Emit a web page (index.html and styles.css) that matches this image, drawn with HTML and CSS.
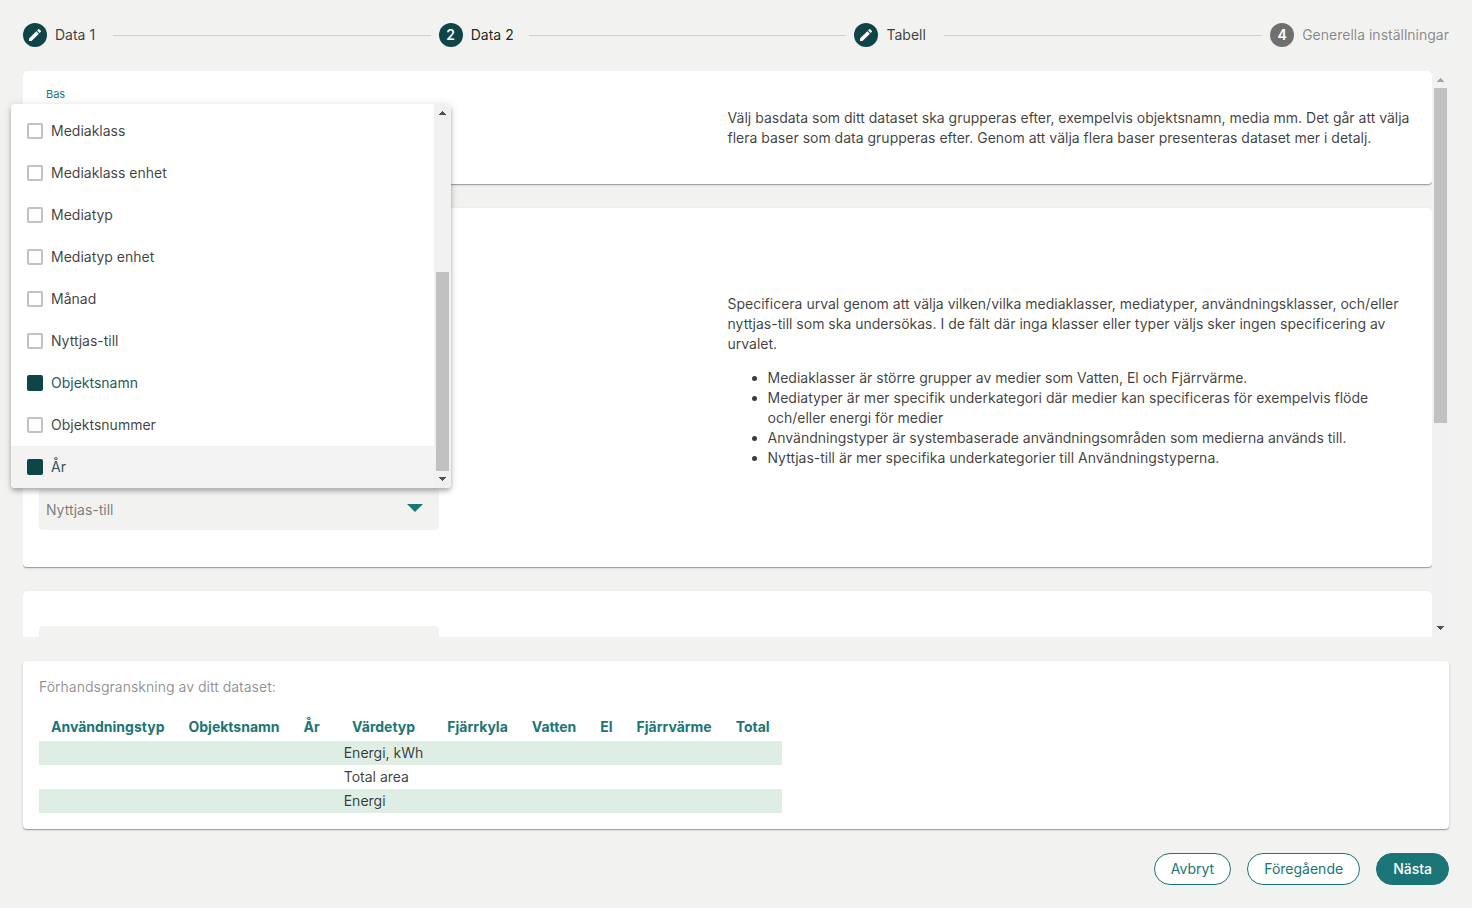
FILE: index.html
```html
<!DOCTYPE html>
<html lang="sv">
<head>
<meta charset="utf-8">
<meta name="viewport" content="width=device-width, initial-scale=1">
<title>Data 2</title>
<link rel="stylesheet" href="styles.css">
</head>
<body>
<div class="page">
  <ol class="stepper">
    <li class="step"><span class="step-icon"><svg viewBox="0 0 24 24" width="16" height="16" aria-hidden="true"><path d="M3 17.25V21h3.75L17.81 9.94l-3.75-3.75L3 17.25zM20.71 7.04a1 1 0 0 0 0-1.41l-2.34-2.34a1 1 0 0 0-1.41 0l-1.83 1.83 3.75 3.75 1.83-1.83z"/></svg></span><span class="step-label">Data 1</span></li>
    <li class="step-line" role="presentation"></li>
    <li class="step" aria-current="step"><span class="step-icon">2</span><span class="step-label current">Data 2</span></li>
    <li class="step-line" role="presentation"></li>
    <li class="step"><span class="step-icon"><svg viewBox="0 0 24 24" width="16" height="16" aria-hidden="true"><path d="M3 17.25V21h3.75L17.81 9.94l-3.75-3.75L3 17.25zM20.71 7.04a1 1 0 0 0 0-1.41l-2.34-2.34a1 1 0 0 0-1.41 0l-1.83 1.83 3.75 3.75 1.83-1.83z"/></svg></span><span class="step-label">Tabell</span></li>
    <li class="step-line" role="presentation"></li>
    <li class="step"><span class="step-icon idle">4</span><span class="step-label idle-label">Generella inställningar</span></li>
  </ol>

  <main class="scroll-area">
    <div class="cards">
      <section class="card split">
        <div class="fields">
          <div class="field">
            <label class="float-label" for="bas">Bas</label>
            <div class="select-box"><select id="bas"><option>Objektsnamn, År</option></select><svg class="caret" viewBox="0 0 16 8" aria-hidden="true"><path d="M0 0h16L8 8z"/></svg></div>
          </div>
        </div>
        <div class="help">
          <p>Välj basdata som ditt dataset ska grupperas efter, exempelvis objektsnamn, media mm. Det går att välja flera baser som data grupperas efter. Genom att välja flera baser presenteras dataset mer i detalj.</p>
        </div>
      </section>

      <section class="card split">
        <div class="fields">
          <div class="field"><div class="select-box"><select aria-label="Mediaklass"><option>Mediaklass</option></select><svg class="caret" viewBox="0 0 16 8" aria-hidden="true"><path d="M0 0h16L8 8z"/></svg></div></div>
          <div class="field"><div class="select-box"><select aria-label="Mediatyp"><option>Mediatyp</option></select><svg class="caret" viewBox="0 0 16 8" aria-hidden="true"><path d="M0 0h16L8 8z"/></svg></div></div>
          <div class="field"><div class="select-box"><select aria-label="Användningstyp"><option>Användningstyp</option></select><svg class="caret" viewBox="0 0 16 8" aria-hidden="true"><path d="M0 0h16L8 8z"/></svg></div></div>
          <div class="field"><div class="select-box"><select aria-label="Nyttjas-till"><option>Nyttjas-till</option></select><svg class="caret" viewBox="0 0 16 8" aria-hidden="true"><path d="M0 0h16L8 8z"/></svg></div></div>
        </div>
        <div class="help">
          <p>Specificera urval genom att välja vilken/vilka mediaklasser, mediatyper, användningsklasser, och/eller nyttjas-till som ska undersökas. I de fält där inga klasser eller typer väljs sker ingen specificering av urvalet.</p>
          <ul>
            <li>Mediaklasser är större grupper av medier som Vatten, El och Fjärrvärme.</li>
            <li>Mediatyper är mer specifik underkategori där medier kan specificeras för exempelvis flöde och/eller energi för medier</li>
            <li>Användningstyper är systembaserade användningsområden som medierna används till.</li>
            <li>Nyttjas-till är mer specifika underkategorier till Användningstyperna.</li>
          </ul>
        </div>
      </section>

      <section class="card split">
        <div class="fields">
          <div class="field"><div class="select-box"><select aria-label="Värdetyp"><option></option></select></div></div>
        </div>
      </section>
    </div>
    <div class="scrollbar" aria-hidden="true">
      <svg class="arrow muted" viewBox="0 0 17 17"><path d="M5 11h7L8.5 7z"/></svg>
      <div class="track"><div class="thumb page-thumb"></div></div>
      <svg class="arrow" viewBox="0 0 17 17"><path d="M5 6h7L8.5 10z"/></svg>
    </div>
  </main>

  <section class="card preview">
    <p class="preview-title">Förhandsgranskning av ditt dataset:</p>
    <table>
      <thead>
        <tr><th>Användningstyp</th><th>Objektsnamn</th><th>År</th><th>Värdetyp</th><th>Fjärrkyla</th><th>Vatten</th><th>El</th><th>Fjärrvärme</th><th>Total</th></tr>
      </thead>
      <tbody>
        <tr><td></td><td></td><td></td><td>Energi, kWh</td><td></td><td></td><td></td><td></td><td></td></tr>
        <tr><td></td><td></td><td></td><td>Total area</td><td></td><td></td><td></td><td></td><td></td></tr>
        <tr><td></td><td></td><td></td><td>Energi</td><td></td><td></td><td></td><td></td><td></td></tr>
      </tbody>
    </table>
  </section>

  <footer class="actions">
    <button type="button" class="btn">Avbryt</button>
    <button type="button" class="btn">Föregående</button>
    <button type="button" class="btn primary">Nästa</button>
  </footer>
</div>

<div class="menu">
  <div class="options">
    <label class="option"><input type="checkbox">Mediaklass</label>
    <label class="option"><input type="checkbox">Mediaklass enhet</label>
    <label class="option"><input type="checkbox">Mediatyp</label>
    <label class="option"><input type="checkbox">Mediatyp enhet</label>
    <label class="option"><input type="checkbox">Månad</label>
    <label class="option"><input type="checkbox">Nyttjas-till</label>
    <label class="option chosen"><input type="checkbox" checked>Objektsnamn</label>
    <label class="option"><input type="checkbox">Objektsnummer</label>
    <label class="option chosen active"><input type="checkbox" checked>År</label>
  </div>
  <div class="scrollbar" aria-hidden="true">
    <svg class="arrow" viewBox="0 0 17 17"><path d="M5 11h7L8.5 7z"/></svg>
    <div class="track end"><div class="thumb menu-thumb"></div></div>
    <svg class="arrow" viewBox="0 0 17 17"><path d="M5 6h7L8.5 10z"/></svg>
  </div>
</div>
</body>
</html>
```
FILE: styles.css
```css
* { box-sizing: border-box; }

body {
  margin: 0;
  background: #f2f2f0;
  color: rgba(0, 0, 0, 0.76);
  font: 400 14px/20px Inter, "Liberation Sans", sans-serif;
}

.page {
  height: 100vh;
  padding: 23px;
  display: flex;
  flex-direction: column;
  gap: 24px;
}

/* Stepper */
.stepper {
  display: flex;
  align-items: center;
  gap: 8px;
  margin: 0;
  padding: 0;
  list-style: none;
}
.step { display: flex; align-items: center; gap: 8px; }
.step-icon {
  width: 24px;
  height: 24px;
  border-radius: 50%;
  background: #104547;
  color: #fff;
  font-weight: 600;
  display: flex;
  align-items: center;
  justify-content: center;
}
.step-icon svg { fill: #fff; }
.step-icon.idle { background: #6f6f6e; }
.step-label { min-width: 50px; }
.step-label.current { color: rgba(0, 0, 0, 0.87); }
.step-label.idle-label { color: rgba(0, 0, 0, 0.46); }
.step-line { flex: 1; height: 1px; background: #d0d0ce; }

/* Cards */
.scroll-area {
  flex: 1;
  min-height: 0;
  display: flex;
  overflow: hidden;
}
.cards { flex: 1; display: flex; flex-direction: column; gap: 24px; }
.card {
  flex-shrink: 0;
  padding: 16px;
  background: #fff;
  border-radius: 4px;
  box-shadow: 0 1px 1px rgba(0, 0, 0, 0.3), 0 1px 3px rgba(0, 0, 0, 0.12);
}
.split { display: grid; grid-template-columns: 1fr 1fr; align-items: center; }
.fields { display: flex; flex-direction: column; gap: 1px; }
.field { position: relative; max-width: 400px; padding: 19px 0 21px; }
.float-label {
  position: absolute;
  top: 0;
  left: 7px;
  font-size: 11px;
  line-height: 14px;
  color: #1b7577;
}
.select-box { position: relative; height: 41px; }
.select-box select {
  width: 100%;
  height: 100%;
  padding: 0 32px 0 7px;
  border: 0;
  border-radius: 4px;
  background: #f2f2f0;
  color: rgba(0, 0, 0, 0.5);
  font: inherit;
  appearance: none;
}
.caret {
  position: absolute;
  top: 15px;
  right: 16px;
  width: 16px;
  height: 8px;
  fill: #1b7577;
  pointer-events: none;
}
.help p { margin: 0; }
.help ul { margin: 14px 0; padding-left: 40px; }

/* Scrollbars */
.scrollbar {
  width: 17px;
  flex-shrink: 0;
  display: flex;
  flex-direction: column;
  background: #f1f1f1;
}
.arrow { width: 17px; height: 17px; fill: #505050; shape-rendering: crispEdges; }
.arrow.muted { fill: #a3a3a3; }
.track { flex: 1; display: flex; flex-direction: column; padding: 0 2px; }
.track.end { justify-content: flex-end; }
.thumb { background: #c1c1c1; }
.page-thumb { height: 63%; }
.menu-thumb { height: 57%; }

/* Preview */
.preview-title { margin: 0 0 16px; color: rgba(0, 0, 0, 0.44); }
.preview table { border-collapse: collapse; }
.preview th {
  padding: 4px 12px;
  color: #1b7577;
  font-weight: 700;
}
.preview td { height: 24px; padding: 0 12px; }
.preview tbody tr:nth-child(odd) { background: #dfeee4; }

/* Buttons */
.actions { display: flex; justify-content: flex-end; gap: 16px; }
.btn {
  height: 32px;
  padding: 0 16px;
  border: 1px solid #1b7577;
  border-radius: 16px;
  background: #fff;
  color: #1b7577;
  font: inherit;
}
.btn.primary { background: #1b7577; color: #fff; font-weight: 500; }

/* Open menu of the first field */
.menu {
  position: absolute;
  top: 104px;
  left: 11px;
  width: 440px;
  display: flex;
  overflow: hidden;
  background: #fff;
  border-radius: 4px;
  box-shadow: 0 2px 4px -1px rgba(0, 0, 0, 0.2), 0 4px 5px rgba(0, 0, 0, 0.14), 0 1px 10px rgba(0, 0, 0, 0.12);
}
.options { flex: 1; padding-top: 6px; }
.option {
  display: flex;
  align-items: center;
  gap: 8px;
  height: 42px;
  padding: 0 16px;
}
.option.chosen { color: #2a595b; }
.option.active { background: #f3f3f3; }
.option input {
  width: 16px;
  height: 16px;
  margin: 0;
  border: 2px solid #c1c1c1;
  border-radius: 2px;
  appearance: none;
}
.option input:checked { border-color: #104547; background: #104547; }
```
